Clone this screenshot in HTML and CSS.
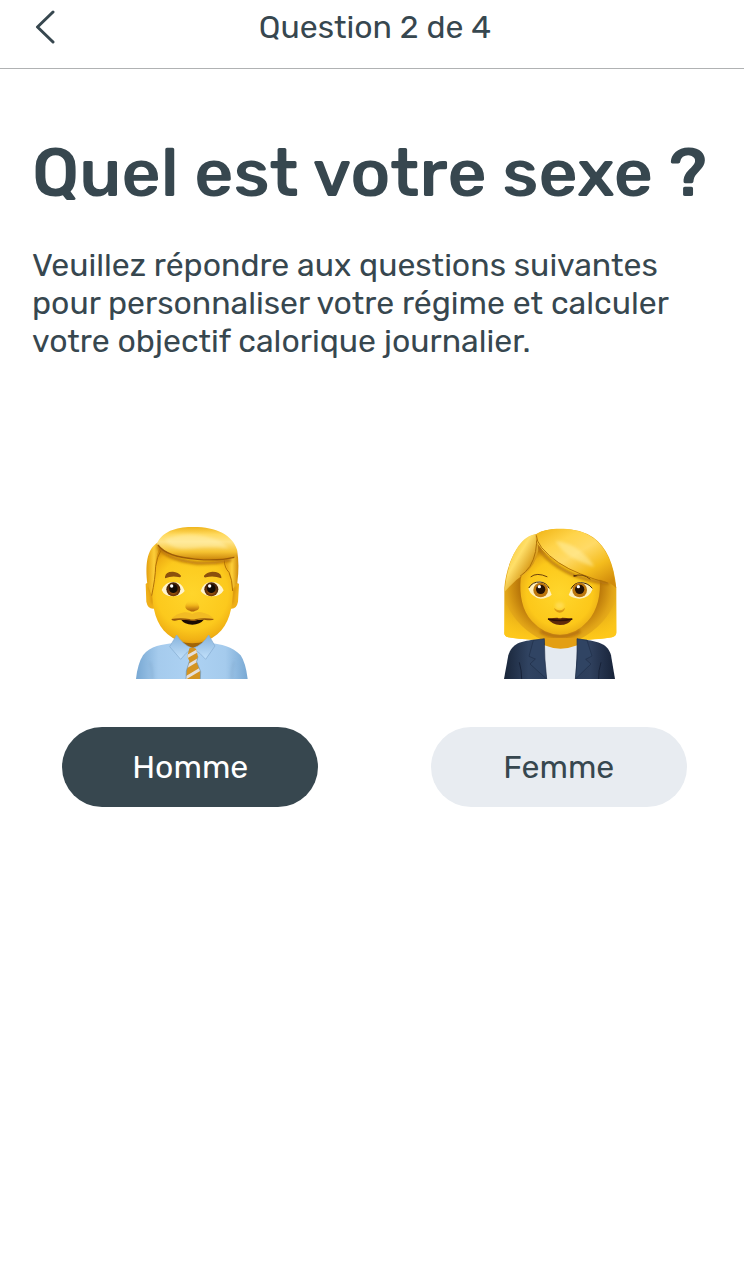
FILE: index.html
```html
<!DOCTYPE html>
<html lang="fr">
<head>
<meta charset="utf-8">
<meta name="viewport" content="width=device-width, initial-scale=1">
<title>Question 2 de 4</title>
<link rel="stylesheet" href="styles.css">
</head>
<body>
<header class="topbar">
  <button class="back" type="button" aria-label="Retour">
    <svg class="back-icon" viewBox="0 0 20 34" aria-hidden="true"><path d="M18 2 2.500 17 18 32"/></svg>
  </button>
  <p class="progress">Question 2 de 4</p>
</header>
<main class="content">
  <h1 class="title">Quel est votre sexe ?</h1>
  <p class="intro">Veuillez répondre aux questions suivantes<br>pour personnaliser votre régime et calculer<br>votre objectif calorique journalier.</p>
  <div class="choices">
    <div class="choice">
      <svg class="avatar" viewBox="-12 0 390 492" aria-hidden="true">
        <defs>
          <radialGradient id="mFace" gradientUnits="userSpaceOnUse" cx="190" cy="235" r="165"><stop offset="0" stop-color="#ffd52b"/><stop offset=".65" stop-color="#fcc91d"/><stop offset=".85" stop-color="#f0b014"/><stop offset="1" stop-color="#cc8209"/></radialGradient>
          <linearGradient id="mHair" x1="0" y1="0" x2="0" y2="1"><stop offset="0" stop-color="#efb51c"/><stop offset=".22" stop-color="#ffd95d"/><stop offset=".45" stop-color="#ffe488"/><stop offset=".75" stop-color="#f6c332"/><stop offset="1" stop-color="#c98309"/></linearGradient>
          <linearGradient id="mSide" x1="0" y1="0" x2="1" y2="0"><stop offset="0" stop-color="#e4a00f"/><stop offset=".5" stop-color="#fdce38"/><stop offset="1" stop-color="#d08b0d"/></linearGradient>
          <linearGradient id="mShirt" x1="0" y1="0" x2="1" y2="0"><stop offset="0" stop-color="#78a8d3"/><stop offset=".2" stop-color="#a5cbed"/><stop offset=".5" stop-color="#add2f3"/><stop offset=".8" stop-color="#a5cbed"/><stop offset="1" stop-color="#78a8d3"/></linearGradient>
          <linearGradient id="mCollar" x1="0" y1="0" x2="0" y2="1"><stop offset="0" stop-color="#86b2db"/><stop offset="1" stop-color="#c2e1fb"/></linearGradient>
          <linearGradient id="nose" x1="0" y1="0" x2="0" y2="1"><stop offset="0" stop-color="#ffd32b" stop-opacity="0"/><stop offset=".5" stop-color="#eeb01a"/><stop offset="1" stop-color="#a95e08"/></linearGradient>
          <radialGradient id="iris" cy=".65"><stop offset="0" stop-color="#b9680b"/><stop offset=".6" stop-color="#753a08"/><stop offset="1" stop-color="#472308"/></radialGradient>
          <filter id="soft" x="-30%" y="-30%" width="160%" height="160%"><feGaussianBlur stdDeviation="4"/></filter>
          <clipPath id="tieClip"><path d="M181 400 191 397 201 401 207 425 203 440 215 470 214 492H171L172 468 181 439 175 424Z"/></clipPath>
        </defs>
        <path d="M136 384C100 389 64 391 42 421Q26 446 21 492H356Q350 443 335 421C310 393 275 388 245 384Z" fill="url(#mShirt)"/>
        <path d="M63 440Q71 464 70 492M315 440Q307 464 308 492" fill="none" stroke="#7fa7cb" stroke-width="3" filter="url(#soft)"/>
        <path d="M137 355H245L235 391Q190 407 146 391Z" fill="#a16507"/>
        <path d="M50 207Q54 199 80 210V280Q57 286 52 260ZM330 207Q325 199 300 210V280Q322 286 327 260Z" fill="#f0b018"/>
        <path d="M59 215Q68 225 71 266M321 215Q312 225 309 266" fill="none" stroke="#bd780a" stroke-width="4" filter="url(#soft)"/>
        <path d="M72 120Q80 90 100 92L300 100 312 132V215C312 284 299 328 265 358Q233 385 190 385T116 358C82 328 69 284 69 215Z" fill="url(#mFace)"/>
        <path d="M98 88Q82 111 78 160Q79 192 68 242L55 206C49 155 51 101 88 82Z" fill="url(#mSide)"/>
        <path d="M324 104Q332 150 325 204L311 222Q309 183 300 168Q287 150 290 120Z" fill="url(#mSide)"/>
        <path d="M96 106Q84 125 80 154Q79 190 68 242M286 136Q286 158 300 172Q310 194 311 228" fill="none" stroke="#b27108" stroke-width="3"/>
        <path d="M88 94Q110 133 203 144Q255 146 307 134" fill="none" stroke="#b56f07" stroke-width="9" filter="url(#soft)"/>
        <path d="M84 86C99 49 145 35 190 36C260 35 310 59 324 104Q326 122 316 127Q270 140 205 132Q111 125 84 86Z" fill="url(#mHair)"/>
        <path d="M87 90Q112 126 205 133Q270 138 316 127" fill="none" stroke="#9d5c08" stroke-width="4"/>
        <path d="M108 72Q170 50 229 64Q282 75 298 100Q242 92 194 100Q125 108 108 72Z" fill="#fff1b0" opacity=".5" filter="url(#soft)"/>
        <path d="M108 185Q111 169 132 170Q148 171 156 182Q156 188 148 186Q129 181 108 190ZM225 182Q233 171 250 170Q274 170 277 185V190Q254 181 231 187Q223 188 225 182Z" fill="#8b500d"/>
        <path d="M98 225Q109 199 135 201Q160 203 167 228Q155 244 131 244Q106 244 98 225ZM215 228Q222 203 247 201Q273 200 284 226Q274 244 251 244Q226 244 215 228Z" fill="#fff4cd"/>
        <circle cx="133" cy="223" r="21" fill="url(#iris)"/><circle cx="247" cy="223" r="21" fill="url(#iris)"/>
        <circle cx="133" cy="221" r="13" fill="#120b04"/><circle cx="247" cy="221" r="13" fill="#120b04"/>
        <circle cx="128" cy="213" r="5" fill="#fff"/><circle cx="242" cy="213" r="5" fill="#fff"/>
        <path d="M181 255Q168 265 169 277Q172 286 182 287Q190 292 199 287Q210 285 211 276Q209 264 199 255Z" fill="url(#nose)"/>
        <path d="M155 313Q190 319 226 313Q213 329 190 329Q166 329 155 313Z" fill="#1c0b03"/>
        <path d="M127 312Q141 296 166 292Q180 290 190 297Q201 289 217 292Q240 296 255 312Q225 311 201 314H181Q154 311 127 312Z" fill="#f2bb24"/>
        <path d="M127 312Q154 308 181 312Q190 315 201 312Q226 308 255 312Q251 319 225 314Q208 312 200 317Q190 319 181 316Q155 312 138 317Q128 318 127 312Z" fill="#95560b"/>
        <path d="M143 360 122 395 155 433Q169 414 190 400Q160 388 143 360ZM239 360 258 393 230 433Q214 414 192 400Q223 388 239 360Z" fill="url(#mCollar)" stroke="#84abd0" stroke-width="2"/>
        <g clip-path="url(#tieClip)"><path d="M165 390H220V495H165Z" fill="#d49422"/><path d="M167 429 215 402M166 459 219 427M166 491 223 457" stroke="#e4dfdb" stroke-width="9"/></g>
        <path d="M171 492 172 468 181 439M207 425 203 440 215 470 214 492" fill="none" stroke="#6f95b5" stroke-width="2"/>
      </svg>
      <button class="pill selected" type="button" aria-pressed="true">Homme</button>
    </div>
    <div class="choice">
      <svg class="avatar" viewBox="0 0 390 492" aria-hidden="true">
        <defs>
          <radialGradient id="wHair" gradientUnits="userSpaceOnUse" cx="196" cy="210" r="205"><stop offset="0" stop-color="#8f5008"/><stop offset=".58" stop-color="#b87509"/><stop offset=".78" stop-color="#e0a317"/><stop offset="1" stop-color="#f8c51d"/></radialGradient>
          <radialGradient id="wFace" gradientUnits="userSpaceOnUse" cx="197" cy="235" r="145"><stop offset="0" stop-color="#ffd62c"/><stop offset=".68" stop-color="#fcc81a"/><stop offset=".85" stop-color="#edb116"/><stop offset="1" stop-color="#c07c09"/></radialGradient>
          <linearGradient id="wTop" x1="0" y1="0" x2=".8" y2="1"><stop offset="0" stop-color="#f0b313"/><stop offset=".28" stop-color="#ffd44a"/><stop offset=".5" stop-color="#ffda66"/><stop offset=".75" stop-color="#f4bc1d"/><stop offset="1" stop-color="#d18b0b"/></linearGradient>
          <linearGradient id="wLeft" x1="0" y1="0" x2="1" y2="1"><stop offset="0" stop-color="#f2b80e"/><stop offset=".4" stop-color="#ffdf69"/><stop offset=".7" stop-color="#d4930f"/><stop offset="1" stop-color="#bc7608"/></linearGradient>
          <linearGradient id="wBottom" x1="0" y1="0" x2="0" y2="1"><stop offset="0" stop-color="#f5bd14" stop-opacity="0"/><stop offset="1" stop-color="#ffc91b"/></linearGradient>
          <linearGradient id="jacket" x1="0" y1="0" x2="1" y2="0"><stop offset="0" stop-color="#192539"/><stop offset=".22" stop-color="#304361"/><stop offset=".5" stop-color="#293b58"/><stop offset=".78" stop-color="#2f405d"/><stop offset="1" stop-color="#172238"/></linearGradient>
        </defs>
        <path d="M128 57C67 70 36 157 31 218V351Q29 363 43 367C88 374 136 375 199 375S310 374 354 367Q368 363 367 350V220C360 146 338 97 297 67Q258 40 195 42Q150 42 128 57Z" fill="url(#wHair)"/>
        <path d="M31 250Q58 330 144 375Q75 374 43 367Q29 363 31 351ZM367 250Q340 330 254 375Q322 374 354 367Q368 363 367 350Z" fill="url(#wBottom)"/>
        <path d="M118 374C81 379 54 384 43 421L30 492H363L351 421C342 386 312 380 277 374Z" fill="url(#jacket)"/>
        <path d="M145 390H250L244 492H158Z" fill="#e4eaf1"/>
        <path d="M151 345H250V391Q199 411 151 391Z" fill="#e39f14"/>
        <path d="M140 348Q198 380 258 348" fill="none" stroke="#b67209" stroke-width="12" filter="url(#soft)"/>
        <path d="M151 371 118 376 105 424 124 432 108 447 158 492Q151 433 151 371ZM249 371 279 376 294 423 275 433 291 447 244 492Q252 431 249 371Z" fill="#304463" stroke="#1f2f49" stroke-width="2"/>
        <path d="M76 442Q83 466 83 492M321 442Q313 466 314 492" fill="none" stroke="#172238" stroke-width="3"/>
        <path d="M127 96Q90 150 80 192C76 238 84 286 114 319Q150 359 198 359T281 319C311 286 321 238 317 190Q218 162 148 104Z" fill="url(#wFace)"/>
        <path d="M130 93Q160 145 242 181Q296 202 345 205" fill="none" stroke="#b27108" stroke-width="8" filter="url(#soft)"/>
        <path d="M127 58C79 61 48 127 37 190L31 232Q60 197 90 178Q124 154 133 106Z" fill="url(#wLeft)"/>
        <path d="M127 58Q132 113 108 154Q95 172 78 184" fill="none" stroke="#af7108" stroke-width="3"/>
        <path d="M127 57C155 39 205 39 240 45C308 57 342 107 357 167L367 220Q350 201 318 194Q270 184 222 158Q155 125 132 88Q124 69 127 57Z" fill="url(#wTop)"/>
        <path d="M127 61Q127 77 143 98Q185 148 260 177Q302 194 341 204" fill="none" stroke="#b37309" stroke-width="3"/>
        <path d="M185 78Q225 82 255 105Q290 132 300 155Q260 143 225 122Q200 105 185 78Z" fill="#fff0a6" opacity=".5" filter="url(#soft)"/>
        <path d="M111 185Q128 171 159 185M239 183Q265 173 288 192" fill="none" stroke="#6e410b" stroke-width="3" stroke-linecap="round"/>
        <path d="M238 179 252 183 241 185Z" fill="#50290a"/>
        <path d="M103 221Q114 200 138 199Q160 201 173 239Q160 250 140 251Q112 246 103 221ZM224 240Q237 202 259 201Q284 202 296 222Q287 249 257 251Q235 250 224 240Z" fill="#fff1bd"/>
        <path d="M105 218Q115 200 138 201Q156 202 165 219M232 220Q241 203 259 203Q282 203 294 219" fill="none" stroke="#372207" stroke-width="3" stroke-linecap="round"/>
        <circle cx="140" cy="225" r="22" fill="#bd760c"/><circle cx="257" cy="225" r="22" fill="#bd760c"/>
        <circle cx="140" cy="223" r="14" fill="#241304"/><circle cx="257" cy="223" r="14" fill="#241304"/>
        <circle cx="136" cy="215" r="5" fill="#fff"/><circle cx="253" cy="215" r="5" fill="#fff"/>
        <path d="M180 279Q184 292 197 293Q211 291 213 278Q205 286 197 286T180 279Z" fill="#d9970f"/><ellipse cx="197" cy="272" rx="13" ry="10" fill="#ffdc4f" filter="url(#soft)"/>
        <path d="M161 311Q181 308 190 308Q197 312 205 308Q216 308 235 311Q223 330 198 330Q174 329 161 311Z" fill="#5f2a0b"/>
        <path d="M162 312Q198 321 235 312" fill="none" stroke="#2f1006" stroke-width="4"/>
      </svg>
      <button class="pill" type="button" aria-pressed="false">Femme</button>
    </div>
  </div>
</main>
</body>
</html>
```
FILE: styles.css
```css
* { box-sizing: border-box; }
body {
  margin: 0;
  background: #fff;
  color: #37474f;
  font-family: Rubik, Roboto, sans-serif;
}
button {
  border: 0;
  font: inherit;
  color: inherit;
  cursor: pointer;
}
.topbar {
  display: grid;
  grid-template-columns: 1fr auto 1fr;
  align-items: center;
  padding: 7px 29px 21px 35px;
  border-bottom: 1px solid #b0b2b3;
}
.back {
  justify-self: start;
  display: flex;
  padding: 0;
  background: none;
}
.back-icon {
  width: 20px;
  height: 34px;
  fill: none;
  stroke: #37474f;
  stroke-width: 3;
  stroke-linecap: round;
  stroke-linejoin: round;
}
.progress {
  margin: 0;
  font-size: 32px;
  line-height: 40px;
}
.content { padding-top: 64px; }
.title {
  margin: 0 32px;
  font-size: 68px;
  line-height: 80px;
  font-weight: 500;
}
.intro {
  margin: 33px 32px 0;
  font-size: 32px;
  line-height: 38px;
}
.choices {
  display: grid;
  grid-template-columns: 1fr 1fr;
  padding: 0 1px 0 6px;
  margin-top: 155px;
}
.choice {
  display: flex;
  flex-direction: column;
  align-items: center;
  gap: 48px;
}
.avatar {
  width: 130px;
  height: 164px;
}
.pill {
  width: 256px;
  height: 80px;
  padding: 0;
  border-radius: 40px;
  background: #e8ecf1;
  font-size: 32px;
}
.selected {
  background: #37474f;
  color: #fff;
}
```
